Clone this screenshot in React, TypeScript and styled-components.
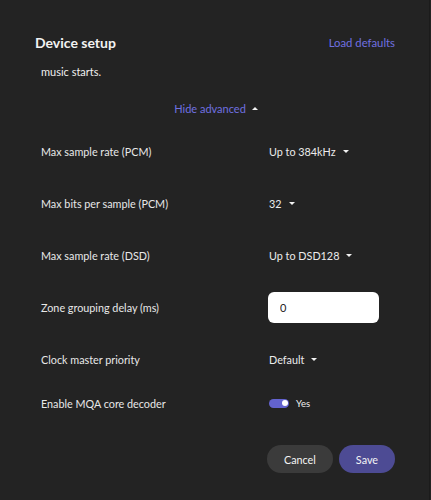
import React from 'react';
import styled, { createGlobalStyle } from 'styled-components';

const GlobalStyle = createGlobalStyle`
  html, body {
    margin: 0;
    padding: 0;
    background: #232323;
  }
  body {
    font-family: Lato, "Noto Sans", sans-serif;
    color: #e8e8e8;
  }
`;

const Page = styled.div`
  width: 430px;
  height: 500px;
  box-sizing: border-box;
  background: #232323;
  border-right: 1px solid #1b1b1b;
  padding: 30px 34px 0 35px;
  overflow: hidden;
`;

const Header = styled.div`
  display: flex;
  align-items: center;
  justify-content: space-between;
  height: 24px;
`;

const Title = styled.h1`
  margin: 0;
  font-size: 14px;
  font-weight: 700;
  color: #f2f2f2;
`;

const LinkButton = styled.span`
  font-size: 11.3px;
  color: #7070e0;
  cursor: pointer;
`;

const Body = styled.div`
  padding-left: 6px;
`;

const Description = styled.p`
  margin: 10px 0 0 0;
  font-size: 11px;
  line-height: 16px;
  color: #f0f0f0;
`;

const AdvancedToggle = styled.div`
  display: flex;
  align-items: center;
  justify-content: center;
  gap: 6px;
  height: 20px;
  margin-top: 18px;
  margin-left: -4px;
  font-size: 11px;
  color: #7070e0;
`;

const Rows = styled.div`
  margin-top: 7px;
`;

const Row = styled.div<{ $h?: number }>`
  display: grid;
  grid-template-columns: 228px 1fr;
  align-items: center;
  height: ${(p) => p.$h ?? 52}px;
`;

const Label = styled.div`
  font-size: 10.8px;
  color: #e8e8e8;
`;

const Select = styled.div`
  display: flex;
  align-items: center;
  gap: 7px;
  font-size: 10.8px;
  color: #ececec;
  cursor: pointer;
`;

const Caret = styled.span<{ $up?: boolean }>`
  width: 0;
  height: 0;
  border-left: 3px solid transparent;
  border-right: 3px solid transparent;
  ${(p) =>
    p.$up
      ? 'border-bottom: 3.5px solid #f2f2f2;'
      : 'border-top: 3.5px solid #f2f2f2;'}
`;

const Input = styled.input`
  box-sizing: border-box;
  width: 111px;
  height: 31px;
  margin-left: -1px;
  border: none;
  border-radius: 6px;
  background: #ffffff;
  padding: 0 12px;
  font-family: Lato, sans-serif;
  font-size: 11px;
  color: #222;
  outline: none;
`;

const ToggleWrap = styled.div`
  display: flex;
  align-items: center;
  gap: 7px;
  font-size: 9.5px;
  color: #f0f0f0;
`;

const Track = styled.div<{ $on: boolean }>`
  position: relative;
  width: 20px;
  height: 9px;
  border-radius: 5px;
  background: ${(p) => (p.$on ? '#6363cf' : '#555')};
`;

const Knob = styled.div<{ $on: boolean }>`
  position: absolute;
  top: 1.5px;
  left: ${(p) => (p.$on ? '12.5px' : '1.5px')};
  width: 6px;
  height: 6px;
  border-radius: 50%;
  background: #fff;
`;

const Footer = styled.div`
  display: flex;
  justify-content: flex-end;
  gap: 6px;
  margin-top: 24px;
`;

const Button = styled.button<{ $primary?: boolean }>`
  height: 28px;
  padding: 0 17px;
  border: none;
  border-radius: 14px;
  font-family: Lato, sans-serif;
  font-size: 10.8px;
  color: #f4f4f4;
  background: ${(p) => (p.$primary ? '#4d4b94' : '#3b3b3b')};
  cursor: pointer;
`;

const selects = [
  { label: 'Max sample rate (PCM)', value: 'Up to 384kHz' },
  { label: 'Max bits per sample (PCM)', value: '32' },
  { label: 'Max sample rate (DSD)', value: 'Up to DSD128' },
];

export default function App() {
  return (
    <>
      <GlobalStyle />
      <Page>
        <Header>
          <Title>Device setup</Title>
          <LinkButton>Load defaults</LinkButton>
        </Header>
        <Body>
          <Description>music starts.</Description>
          <AdvancedToggle>
            Hide advanced <Caret $up />
          </AdvancedToggle>
          <Rows>
            {selects.map((s) => (
              <Row key={s.label}>
                <Label>{s.label}</Label>
                <Select>
                  {s.value} <Caret />
                </Select>
              </Row>
            ))}
            <Row>
              <Label>Zone grouping delay (ms)</Label>
              <div>
                <Input defaultValue="0" />
              </div>
            </Row>
            <Row>
              <Label>Clock master priority</Label>
              <Select>
                Default <Caret />
              </Select>
            </Row>
            <Row $h={36}>
              <Label>Enable MQA core decoder</Label>
              <ToggleWrap>
                <Track $on>
                  <Knob $on />
                </Track>
                Yes
              </ToggleWrap>
            </Row>
          </Rows>
          <Footer>
            <Button>Cancel</Button>
            <Button $primary>Save</Button>
          </Footer>
        </Body>
      </Page>
    </>
  );
}
